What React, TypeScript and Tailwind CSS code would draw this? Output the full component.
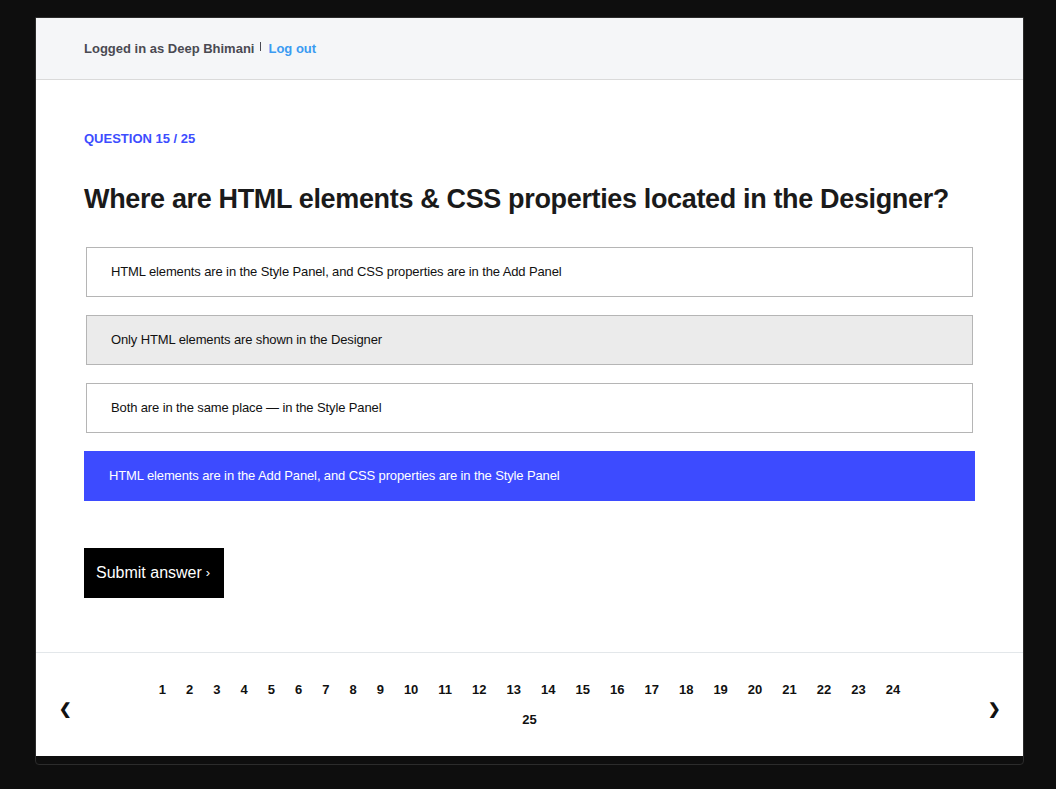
import React from "react";

const options = [
  "HTML elements are in the Style Panel, and CSS properties are in the Add Panel",
  "Only HTML elements are shown in the Designer",
  "Both are in the same place — in the Style Panel",
  "HTML elements are in the Add Panel, and CSS properties are in the Style Panel",
];

export default function App() {
  const selected = 3;
  const hovered = 1;
  const pages = Array.from({ length: 25 }, (_, i) => i + 1);
  return (
    <div
      className="min-h-screen bg-[#0e0e0e] pt-[17px] pb-[24px]"
      style={{ fontFamily: '"Liberation Sans", Arial, Helvetica, sans-serif' }}
    >
      <div className="ml-[35px] w-[989px] border border-[#2c2c2c] rounded-b-[4px] pb-[8px] bg-[#0e0e0e]">
        <div className="bg-white">
          {/* header */}
          <header className="h-[62px] bg-[#f5f6f8] border-b border-[#dadada] pl-[48px] flex items-center">
            <span className="text-[13px] font-bold text-[#4a4a52] leading-none mt-[-1px]">
              Logged in as Deep Bhimani
            </span>
            <span className="inline-block w-px h-[9px] bg-[#4a4a52] ml-[6px] mr-[7px] mt-[-5px]" />
            <a className="text-[13px] font-bold text-[#3b9bf2] leading-none mt-[-1px] cursor-pointer">
              Log out
            </a>
          </header>

          {/* main */}
          <main className="pl-[48px] pr-[48px] pt-[51px] pb-[54px]">
            <div className="text-[13px] leading-[16px] font-bold text-[#3d4dff] uppercase">
              Question 15 / 25
            </div>
            <h1 className="mt-[35px] text-[27px] leading-[34px] font-bold text-[#1a1a1a] tracking-[-0.35px] whitespace-nowrap">
              Where are HTML elements &amp; CSS properties located in the Designer?
            </h1>
            <div className="mt-[31px] flex flex-col gap-[18px]">
              {options.map((o, i) =>
                i === selected ? (
                  <div
                    key={i}
                    className="h-[50px] bg-[#3d4bff] text-white text-[13px] tracking-[-0.12px] flex items-center pl-[25px]"
                  >
                    {o}
                  </div>
                ) : (
                  <div
                    key={i}
                    className={
                      i === hovered
                        ? "h-[50px] mx-[2px] border border-[#b5b5b5] bg-[#ebebeb] text-[#111] text-[13px] tracking-[-0.12px] flex items-center pl-[24px]"
                        : "h-[50px] mx-[2px] border border-[#b5b5b5] bg-white text-[#111] text-[13px] tracking-[-0.12px] flex items-center pl-[24px]"
                    }
                  >
                    {o}
                  </div>
                )
              )}
            </div>
            <button className="mt-[47px] h-[50px] w-[140px] bg-black text-white text-[16px] flex items-center pl-[12px]">
              Submit answer <span className="ml-[4px] text-[13px]">›</span>
            </button>
          </main>

          {/* footer */}
          <footer className="h-[104px] border-t border-[#e3e7ea] flex items-start">
            <div className="w-[56px] h-full flex items-center justify-center pl-[2px] pt-[9px]">
              <span className="text-[15px] font-bold text-[#111]">❮</span>
            </div>
            <div className="flex-1 flex justify-center pt-[22px]">
              <div className="w-[780px] flex flex-wrap justify-center">
                {pages.map((p) => (
                  <span
                    key={p}
                    className="px-[10px] h-[30px] leading-[30px] text-[13px] font-bold text-[#111] cursor-pointer"
                  >
                    {p}
                  </span>
                ))}
              </div>
            </div>
            <div className="w-[56px] h-full flex items-center justify-center pr-[2px] pt-[9px]">
              <span className="text-[15px] font-bold text-[#111]">❯</span>
            </div>
          </footer>
        </div>
      </div>
    </div>
  );
}
